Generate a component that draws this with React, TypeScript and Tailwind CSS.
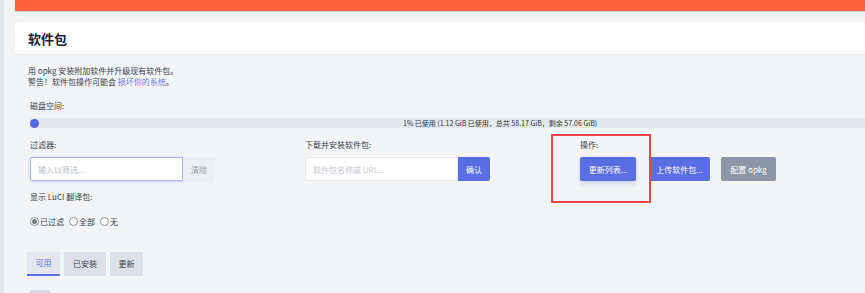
import React from "react";

const font = { fontFamily: '"Noto Sans CJK SC", "Noto Sans", sans-serif' };

function Radio({ checked, label }: { checked?: boolean; label: string }) {
  return (
    <span className="flex items-center gap-[1px]">
      <span className="w-[9px] h-[9px] rounded-full border border-[#8a8f98] bg-white flex items-center justify-center">
        {checked && <span className="w-[5px] h-[5px] rounded-full bg-[#777b84]" />}
      </span>
      <span>{label}</span>
    </span>
  );
}

export default function App() {
  return (
    <div className="w-[865px] h-[293px] overflow-hidden flex bg-[#f3f4f6] text-[#2f3542]" style={font}>
      <div className="w-[4px] shrink-0 bg-[#e3e5e9]" />
      <div className="flex-1 pl-[11px] flex flex-col min-w-0">
        <div className="shrink-0 h-[11px] bg-[#fe6140] shadow-[0_1px_1px_rgba(0,0,0,0.15)]" />
        <div className="shrink-0 mt-[11px] h-[32px] bg-white rounded-l-[3px] shadow-[0_1px_2px_rgba(0,0,0,0.06)] flex items-center pl-[13px]">
          <span className="text-[13px] font-bold text-[#1e2235] leading-none">软件包</span>
        </div>
        <div className="shrink-0 pl-[13px] pt-[11px] text-[8px] leading-[11px] text-[#3a3f4b]">
          <div>用 opkg 安装附加软件并升级现有软件包。</div>
          <div>
            警告！软件包操作可能会 <span className="text-[#6b7be4]">损坏你的系统</span>。
          </div>
        </div>
        <div className="shrink-0 pl-[15px] pt-[13px] text-[8px] leading-[11px] text-[#3a3f4b]">磁盘空间:</div>
        <div className="shrink-0 pl-[15px] pt-[7px]">
          <div className="relative h-[10px] w-[940px] bg-[#e5e8ec] flex items-center justify-center">
            <span className="absolute left-0 top-[0.5px] w-[9px] h-[9px] rounded-full bg-[#5468e2]" />
            <span className="text-[7px] text-[#2f3542] leading-none">1% 已使用 (1.12 GiB 已使用，总共 58.17 GiB，剩余 57.06 GiB)</span>
          </div>
        </div>
        <div className="shrink-0 pl-[15px] pt-[11px] grid grid-cols-[275px_275px_275px] text-[8px] leading-[11px] text-[#3a3f4b]">
          <div>
            <div>过滤器:</div>
            <div className="mt-[7px] flex h-[24px]">
              <div className="w-[153px] border border-[#a9b3f3] bg-white rounded-l-[2px] shadow-[0_1px_3px_rgba(84,104,226,0.25)] flex items-center pl-[7px] text-[#b8bcc4]">
                输入以筛选...
              </div>
              <div className="w-[32px] bg-[#eceef1] rounded-r-[2px] flex items-center justify-center text-[#9aa0aa]">清除</div>
            </div>
          </div>
          <div>
            <div>下载并安装软件包:</div>
            <div className="mt-[7px] flex h-[24px]">
              <div className="w-[153px] border border-[#e6e8ec] bg-white rounded-l-[2px] flex items-center pl-[7px] text-[#c4c8cf]">
                软件包名称或 URL...
              </div>
              <div className="w-[32px] bg-[#5b6de2] rounded-r-[2px] flex items-center justify-center text-white">确认</div>
            </div>
          </div>
          <div className="relative">
            <div className="absolute left-[-29px] top-[-5px] w-[100px] h-[69px] border-2 border-[#ef4747]" />
            <div>操作:</div>
            <div className="mt-[7px] flex h-[24px] gap-[14px]">
              <div className="w-[56px] bg-[#5b6de2] rounded-[2px] shadow-[0_2px_4px_rgba(84,104,226,0.3)] flex items-center justify-center text-white">更新列表...</div>
              <div className="w-[61px] -ml-[1px] bg-[#5b6de2] rounded-[2px] flex items-center justify-center text-white">上传软件包...</div>
              <div className="w-[55px] -ml-[3px] bg-[#8b97a7] rounded-[2px] flex items-center justify-center text-white">配置 opkg</div>
            </div>
          </div>
        </div>
        <div className="shrink-0 pl-[15px] pt-[10px] text-[8px] leading-[11px] text-[#3a3f4b]">显示 LuCI 翻译包:</div>
        <div className="shrink-0 pl-[15px] pt-[14px] flex gap-[5px] text-[8px] leading-[11px] text-[#3a3f4b]">
          <Radio checked label="已过滤" />
          <Radio label="全部" />
          <Radio label="无" />
        </div>
        <div className="shrink-0 pl-[12px] pt-[25px] flex gap-[4px] text-[8px]">
          <div className="w-[33px] h-[24px] bg-[#e4e8ee] border-b-2 border-[#5b6de2] flex items-center justify-center text-[#5b6de2]">可用</div>
          <div className="w-[42px] h-[24px] bg-[#dde1e7] flex items-center justify-center text-[#3a3f4b]">已安装</div>
          <div className="w-[33px] h-[24px] bg-[#dde1e7] flex items-center justify-center text-[#3a3f4b]">更新</div>
        </div>
        <div className="shrink-0 pl-[15px] pt-[14px]">
          <div className="w-[20px] h-[10px] rounded-[2px] bg-[#d5d9e0]" />
        </div>
      </div>
    </div>
  );
}
